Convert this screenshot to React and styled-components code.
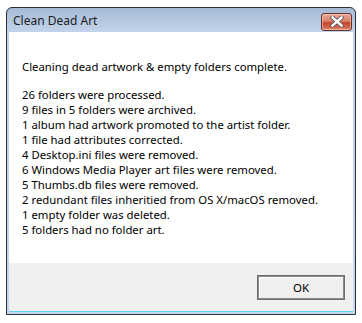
import React from "react";
import styled, { createGlobalStyle } from "styled-components";

const Global = createGlobalStyle`
  html, body { margin: 0; padding: 0; background: #ffffff; }
  body { font-family: "Noto Sans", "Open Sans", sans-serif; }
`;

const Page = styled.div`
  width: 362px;
  height: 323px;
  padding: 7px 0 0 6px;
  box-sizing: border-box;
`;

const Window = styled.div`
  width: 350px;
  height: 308px;
  box-sizing: border-box;
  border: 1px solid #2b2f36;
  border-radius: 6px 6px 0 0;
  background: linear-gradient(#a6bbd6 0px, #b6c9e1 14px, #c2d4eb 24px, #c4d7ee 100%);
  display: flex;
  flex-direction: column;
  padding: 0 2px 2px 2px;
`;

const TitleBar = styled.div`
  height: 24px;
  flex: none;
  display: flex;
  align-items: center;
  justify-content: space-between;
  padding: 0 1px 0 4px;
`;

const Title = styled.span`
  font-size: 12px;
  color: #1b1b1b;
  margin-top: 1px;
`;

const CloseButton = styled.div`
  width: 29px;
  height: 16px;
  margin-top: 3px;
  border: 1px solid #6b2e24;
  border-radius: 3px;
  background: linear-gradient(#e8a797 0%, #d8806b 45%, #c4452c 55%, #cf6a4f 85%, #e09a82 100%);
  box-shadow: inset 0 0 0 1px rgba(255, 220, 210, 0.5);
  display: flex;
  align-items: center;
  justify-content: center;
`;

const Client = styled.div`
  flex: 1;
  display: flex;
  flex-direction: column;
  background: #ffffff;
  border-bottom: 1px solid #5fd0f0;
`;

const Message = styled.div`
  flex: 1;
  padding: 27px 0 0 13px;
  font-size: 11.35px;
  line-height: 15px;
  color: #000;
`;

const Lead = styled.div`
  margin-bottom: 13px;
`;

const Line = styled.div``;

const Footer = styled.div`
  height: 48px;
  flex: none;
  background: #f0f0f0;
  display: flex;
  justify-content: flex-end;
  align-items: flex-start;
  padding: 12px 8px 0 0;
  box-sizing: border-box;
`;

const OkButton = styled.button`
  width: 88px;
  height: 25px;
  box-sizing: border-box;
  border: 1px solid #6e6e6e;
  box-shadow: inset 0 0 0 1px #8a8a8a, inset 1px 1px 0 1px #ffffff;
  background: #efefef;
  font-family: "Noto Sans", "Open Sans", sans-serif;
  font-size: 11.5px;
  color: #000;
  padding: 0;
`;

const lines = [
  "26 folders were processed.",
  "9 files in 5 folders were archived.",
  "1 album had artwork promoted to the artist folder.",
  "1 file had attributes corrected.",
  "4 Desktop.ini files were removed.",
  "6 Windows Media Player art files were removed.",
  "5 Thumbs.db files were removed.",
  "2 redundant files inheritied from OS X/macOS removed.",
  "1 empty folder was deleted.",
  "5 folders had no folder art.",
];

export default function App() {
  return (
    <Page>
      <Global />
      <Window>
        <TitleBar>
          <Title>Clean Dead Art</Title>
          <CloseButton>
            <svg width="14" height="11" viewBox="0 0 14 11">
              <path d="M2.5 1.5 L11.5 9.5 M11.5 1.5 L2.5 9.5" stroke="#5a5a5a" strokeWidth="4.2" strokeLinecap="square" fill="none" />
              <path d="M2.5 1.5 L11.5 9.5 M11.5 1.5 L2.5 9.5" stroke="#ffffff" strokeWidth="2.4" strokeLinecap="square" fill="none" />
            </svg>
          </CloseButton>
        </TitleBar>
        <Client>
          <Message>
            <Lead>Cleaning dead artwork &amp; empty folders complete.</Lead>
            {lines.map((l) => (
              <Line key={l}>{l}</Line>
            ))}
          </Message>
          <Footer>
            <OkButton>OK</OkButton>
          </Footer>
        </Client>
      </Window>
    </Page>
  );
}
